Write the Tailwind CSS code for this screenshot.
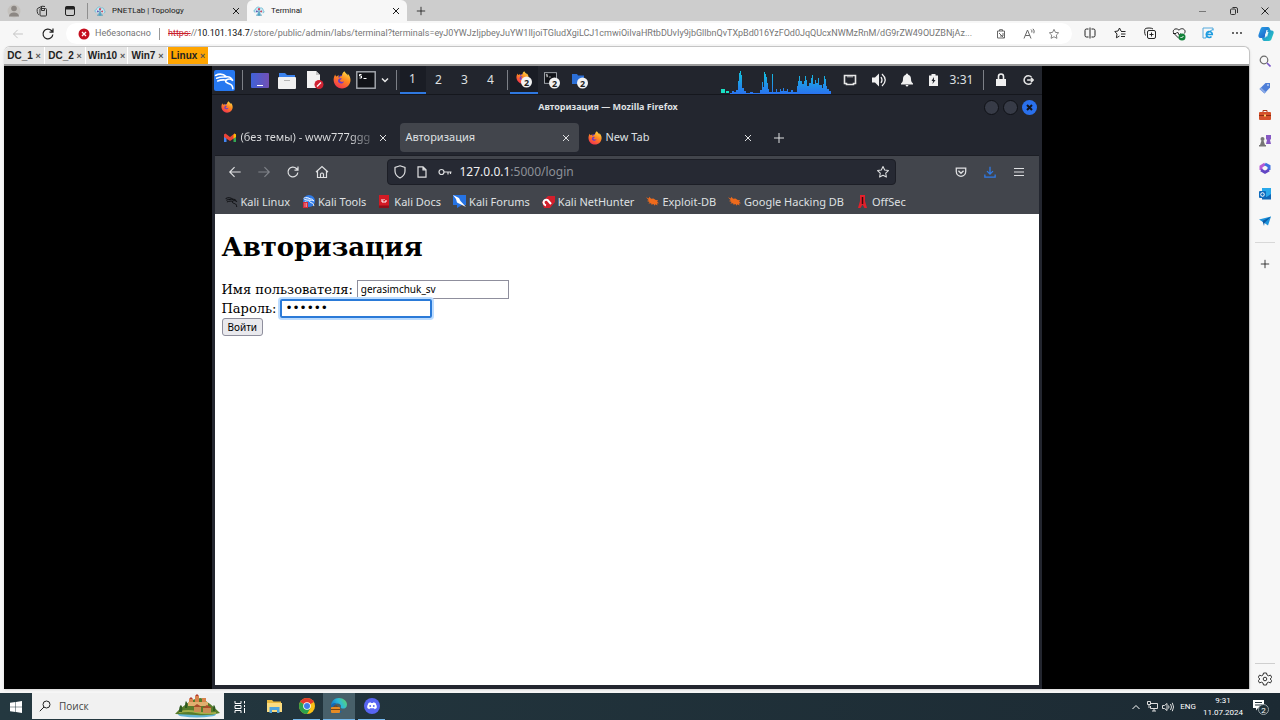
<!DOCTYPE html>
<html lang="ru">
<head>
<meta charset="utf-8">
<title>Terminal</title>
<script src="https://cdn.jsdelivr.net/npm/@tailwindcss/browser@4"></script>
</head>
<body class="h-screen overflow-hidden flex flex-col bg-[#f7f7f7] font-['Roboto','Noto_Sans',sans-serif] text-[#1b1b1b]">

<svg class="absolute size-0" aria-hidden="true">
  <defs>
    <linearGradient id="fox" x1="0.8" y1="0" x2="0.3" y2="1"><stop offset="0" stop-color="#ffe04a"/><stop offset=".45" stop-color="#ff8a1f"/><stop offset="1" stop-color="#f2304f"/></linearGradient>
    <linearGradient id="copilotA" x1="0" y1="0" x2="1" y2="1"><stop offset="0" stop-color="#1a6fd8"/><stop offset="1" stop-color="#2ad0c0"/></linearGradient>
    <linearGradient id="copilotB" x1="0" y1="0" x2="1" y2="1"><stop offset="0" stop-color="#2aa8e8"/><stop offset="1" stop-color="#1b52c4"/></linearGradient>
    <linearGradient id="desk" x1="0" y1="0" x2="1" y2="0"><stop offset="0" stop-color="#3f62d8"/><stop offset="1" stop-color="#7350b4"/></linearGradient>
    <linearGradient id="edge" x1="0" y1="0.6" x2="1" y2="0.2"><stop offset="0" stop-color="#1478c8"/><stop offset=".5" stop-color="#2bb9dc"/><stop offset="1" stop-color="#5fd66a"/></linearGradient>
    <linearGradient id="cpu" x1="0" y1="0" x2="0" y2="1"><stop offset="0" stop-color="#12c4dc"/><stop offset="1" stop-color="#2a72f0"/></linearGradient>
    <symbol id="x" viewBox="0 0 10 10"><path d="M2 2l6 6M8 2l-6 6" fill="none" stroke="currentColor"/></symbol>
    <symbol id="plus" viewBox="0 0 12 12"><path d="M6 1v10M1 6h10" fill="none" stroke="currentColor"/></symbol>
    <symbol id="star" viewBox="0 0 16 16"><path d="M8 1.800l1.900 4 4.300.6-3.100 3 .8 4.400L8 11.700l-3.900 2.100.8-4.400-3.100-3 4.300-.6z" fill="none" stroke="currentColor" stroke-width="1.200" stroke-linejoin="round"/></symbol>
    <symbol id="reload" viewBox="0 0 16 16"><path d="M13.500 8.500a5.600 5.600 0 1 1-1.600-4.500l1.500 1.500M13.700 1.800v4H9.700" fill="none" stroke="currentColor" stroke-width="1.400"/></symbol>
    <symbol id="arrow" viewBox="0 0 16 16"><path d="M14.500 8H2M7.500 2.500L2 8l5.500 5.500" fill="none" stroke="currentColor" stroke-width="1.300"/></symbol>
    <symbol id="firefox" viewBox="0 0 18 18">
      <circle cx="9" cy="9.500" r="5.500" fill="#5a35b8"/>
      <path d="M2.200 3.500C.8 5.700.3 8 .8 10.500c.8 4 4 7 8.200 7 4.800 0 8.500-3.700 8.500-8.400 0-2.800-1.300-5-3-6.500.3.900.4 1.500.3 2C13.700 2.600 12 1.700 11.500.2c-2 1.300-2.600 3-2.500 4.700-1.400 0-2.400.9-2.800 1.800-.3-.1-.5-.2-.7-.3-.2-.8 0-1.600.4-2.300-1 .3-1.800 1-2.300 1.500-.8-.3-1.200-1-1.400-2.100z" fill="url(#fox)"/>
      <path d="M5.500 8.200c.5-1 2-1.100 3.300-.6-.3.900-1.300 1.200-2 1.600.5 1.600 2.500 2.300 4.200 1-.6 2.300-3.200 3-5 1.600-1.100-.9-1.300-2.400-.5-3.600z" fill="#6a3bc8"/>
    </symbol>
    <symbol id="pnet" viewBox="0 0 16 16"><path d="M3 10C.6 9.500.8 6 3.400 6 3.600 3 7.500 1.500 9.500 4c2.600-.8 4.500 1.200 3.700 3 2.300.8 1.800 3.600-.2 3.700" fill="#cdeaf4" stroke="#5fb4cf"/><path d="M8 5v9M4 13.500h8M5 8l3 2 3-2" fill="none" stroke="#3d8fae"/><circle cx="8" cy="5.500" r="1.500" fill="#d8455c"/><circle cx="5" cy="8.500" r="1.200" fill="#6a58b8"/><circle cx="11" cy="8.500" r="1.200" fill="#d8455c"/><rect x="6" y="11" width="4" height="3" fill="#4ba3c6"/></symbol>
    <symbol id="dragon" viewBox="0 0 20 20"><path d="M1.500 5.200C5 3.300 9 3.800 12 6.500M2.500 7.800c4-1.600 7-.9 9.500-1.300 3-.3 4.700 1.200 6 3.600-2-1.600-4.200-2-6-.8-2.600 1.800 1 3.600 3 4 2 .5 2.700 2 3 4.500M3.500 10.500C7 9 9 9.400 11 9.500" fill="none" stroke="currentColor" stroke-width="1.500" stroke-linecap="round"/></symbol>
    <symbol id="term" viewBox="0 0 20 18"><rect x=".8" y=".8" width="18.400" height="16.400" fill="#111318" stroke="#a9adb3" stroke-width="1.400"/><path d="M5.500 3.500h-2v1.500h2v2h-2M7.500 7.500h3" stroke="#fff" fill="none"/></symbol>
    <symbol id="bug" viewBox="0 0 14 12"><path d="M0 1.500l3 1.200L3.500 1l2 2L8 2.800l2.500 1.700 2.500.2-1 1.500 2 1.800-2.200.2.700 2-2.500-1.200-.5 1.500L8 8.800 6 9.500 5.500 8l-3 .2L4 6.500 1 5.500l2-.8z" fill="#ee6a1c"/></symbol>
  </defs>
</svg>

<!-- Browser tab strip -->
<header class="h-[21px] shrink-0 flex items-center bg-[#cdcdcd] text-[8px]">
  <button aria-label="Профиль" class="w-7 flex justify-center"><svg class="size-3.5" viewBox="0 0 14 14"><circle cx="7" cy="7" r="6.500" fill="#c4c1bd"/><circle cx="7" cy="4.500" r="2.800" fill="#8c8783"/><path d="M2 12.500c0-5.500 10-5.500 10 0z" fill="#8c8783"/></svg></button>
  <button aria-label="Рабочие области" class="w-7 flex justify-center"><svg class="size-3" viewBox="0 0 12 12" fill="none" stroke="#333"><rect x="4" y="3.500" width="6.500" height="7.500" rx="1"/><path d="M2.800 9.800C1 9 .8 4 1.500 3.500L6 1.200l3 .3M5.500 1.500v4h3v-2"/></svg></button>
  <button aria-label="Вкладки" class="w-7 flex justify-center"><svg class="size-3" viewBox="0 0 12 12"><rect x="1.500" y="1.500" width="9" height="9" rx="1.500" fill="none" stroke="#222"/><path d="M1.500 1.500h9v3h-9z" fill="#222"/></svg></button>
  <span class="w-px h-4 ml-[3px] bg-[#8f8f8f]"></span>
  <div class="w-[159px] pl-1.5 pr-1.5 flex items-center">
    <svg class="size-3"><use href="#pnet"/></svg><a href="#" class="ml-1.5 flex-1 whitespace-nowrap">PNETLab | Topology</a><button aria-label="Закрыть вкладку"><svg class="size-2.5"><use href="#x"/></svg></button>
  </div>
  <div class="w-[160px] h-full pl-1.5 pr-1.5 flex items-center bg-[#f7f7f7] rounded-t-md">
    <svg class="size-3"><use href="#pnet"/></svg><a href="#" class="ml-1.5 flex-1">Terminal</a><button aria-label="Закрыть вкладку"><svg class="size-2.5"><use href="#x"/></svg></button>
  </div>
  <button aria-label="Новая вкладка" class="w-7 flex justify-center"><svg class="size-2.5"><use href="#plus"/></svg></button>
  <div class="ml-auto flex">
    <button aria-label="Свернуть" class="w-[31px] flex justify-center"><svg class="size-2.5" viewBox="0 0 10 10"><path d="M1 5.500h7" stroke="#777"/></svg></button>
    <button aria-label="Развернуть" class="w-[31px] flex justify-center"><svg class="size-2.5" viewBox="0 0 10 10" fill="none" stroke="#333"><rect x="1.500" y="3" width="5" height="5.500" rx="1"/><path d="M3.500 1.500h3.500a1.500 1.500 0 0 1 1.500 1.500v4"/></svg></button>
    <button aria-label="Закрыть" class="w-[31px] flex justify-center"><svg class="size-2.5" viewBox="0 0 10 10"><path d="M1.500 1.500l7 7M8.500 1.500l-7 7" stroke="#222"/></svg></button>
  </div>
</header>

<!-- Browser address bar -->
<div class="h-[25px] shrink-0 flex items-center text-[#222]">
  <button aria-label="Назад" class="w-9 flex justify-center text-[#c2c2c2]"><svg class="size-3"><use href="#arrow"/></svg></button>
  <button aria-label="Обновить" class="w-6 flex justify-center"><svg class="size-3.5"><use href="#reload"/></svg></button>
  <div class="ml-1.5 h-[21px] flex-1 min-w-0 pl-3 pr-1.5 flex items-center bg-white rounded-full text-[9px] text-[#767676]">
    <svg class="size-3 shrink-0" viewBox="0 0 12 12"><circle cx="6" cy="6" r="5.500" fill="#c50f1f"/><path d="M4 4l4 4M8 4l-4 4" stroke="#fff" stroke-width="1.300"/></svg>
    <span class="w-[60px] ml-[5px] whitespace-nowrap">Небезопасно</span>
    <span class="w-px h-3 bg-[#999] mx-1"></span>
    <p class="flex-1 min-w-0 ml-1 whitespace-nowrap"><span class="text-[#c8202c] line-through">https:</span>//<span class="text-[#111]">10.101.134.7</span>/store/public/admin/labs/terminal?terminals=eyJ0YWJzIjpbeyJuYW1lIjoiTGludXgiLCJ1cmwiOiIvaHRtbDUvIy9jbGllbnQvTXpBd016YzFOd0JqQUcxNWMzRnM/dG9rZW49OUZBNjAz...</p>
    <button aria-label="Приложение" class="w-7 flex justify-center"><svg class="size-2.5" viewBox="0 0 10 10" fill="none" stroke="#666"><path d="M1.500 2h7v7h-7zM3.500 2V.7h3V2M3 4l4.500 4.500M7 4v3H4"/></svg></button>
    <button aria-label="Прочитать вслух" class="w-[27px] flex justify-center"><svg class="size-3" viewBox="0 0 12 12" fill="none" stroke="#666"><path d="M1 10.500L4.500 2 8 10.500M2.200 7.500h4.600M8 1.500q1.500 1 .8 3M10 .8q2 2 .8 4.500"/></svg></button>
    <button aria-label="В избранное" class="w-6 flex justify-center"><svg class="size-3"><use href="#star"/></svg></button>
  </div>
  <div class="flex ml-[3px]">
    <button aria-label="Разделить экран" class="w-[30px] flex justify-center"><svg class="size-3" viewBox="0 0 12 12" fill="none" stroke="#222"><path d="M4.500 2H2.500A1.500 1.500 0 0 0 1 3.500v5A1.500 1.500 0 0 0 2.500 10h2M7.500 2h2A1.500 1.500 0 0 1 11 3.500v5A1.500 1.500 0 0 1 9.500 10h-2M6 .5v11"/></svg></button>
    <button aria-label="Избранное" class="w-[30px] flex justify-center"><svg class="size-3" viewBox="0 0 12 12" fill="none" stroke="#222"><path d="M7 4L5.500 1 4 4l-3.200.5L3 7l-.6 3.800L5.500 9M7 4.500h4.500M7 7h4.500M7 9.500h4"/></svg></button>
    <button aria-label="Коллекции" class="w-[29px] flex justify-center"><svg class="size-3" viewBox="0 0 12 12" fill="none" stroke="#222"><rect x="3.500" y="3.500" width="8" height="8" rx="1.500"/><path d="M1.500 8.500C.2 6 .5 2 1.500 1.500s6-1 7.500.5M7.500 5.500v4M5.500 7.500h4"/></svg></button>
    <button aria-label="Производительность" class="w-[29px] flex justify-center"><svg class="size-3.5" viewBox="0 0 14 14" fill="none"><path d="M7 11.500L2 6.500C-.5 3 4 0 7 3.200 10-.3 15 3 12.300 6.500M1 6.500h3L5.500 5l2 3.500 1-2" stroke="#222"/><circle cx="10" cy="10" r="3.500" fill="#13823a"/><path d="M8.500 10l1 1 2-2" stroke="#fff"/></svg></button>
    <button aria-label="Режим Internet Explorer" class="w-[29px] flex justify-center"><svg class="size-3" viewBox="0 0 12 12" fill="none"><path d="M11 3V1H1v10h3" stroke="#55a9dc"/><path d="M4.500 7.500h5.800A3 3 0 1 0 9.500 9.500" stroke="#1b9be0" stroke-width="1.600"/><path d="M11.500 3C10 2 4.500 6 4 11" stroke="#1b9be0"/></svg></button>
    <button aria-label="Меню" class="w-[29px] flex justify-center"><svg class="size-3" viewBox="0 0 12 12" fill="#222"><circle cx="2" cy="6" r=".9"/><circle cx="6" cy="6" r=".9"/><circle cx="10" cy="6" r=".9"/></svg></button>
  </div>
  <button aria-label="Copilot" class="w-[29px] flex justify-center"><svg class="size-4" viewBox="0 0 16 16"><path d="M4.500 1H10l1.500 3H8.500L6.500 12H2.500C.5 12 0 10 .6 8.500L2.500 3Q3 1 4.500 1z" fill="url(#copilotB)"/><path d="M10 1c2 0 2 3 3 3.500h.8C15.500 4.500 16 6 15.500 7.500L13.500 13q-.6 2-2.500 2H6C4.500 15 4 12 4 11.500h3.500L9.500 5z" fill="url(#copilotA)"/><path d="M7 9l1.500-3h2L9 11z" fill="#e8f7fb"/></svg></button>
</div>

<div class="flex-1 min-h-0 flex">
  <!-- Lab console page -->
  <main class="flex-1 min-w-0 ml-1 mb-1 flex flex-col border-t border-r border-[#c4c4c4] rounded-t-md bg-white shadow-sm">
    <nav class="h-[17px] shrink-0 flex gap-px text-[10px] leading-[17px] font-bold font-['Liberation_Sans',sans-serif] text-[#222]">
      <a href="#" class="w-[40px] text-center bg-[#e6e6e6] rounded-tl-md whitespace-nowrap">DC_1 <span class="text-[9px] text-[#555]">×</span></a>
      <a href="#" class="w-[40px] text-center bg-[#e6e6e6] whitespace-nowrap">DC_2 <span class="text-[9px] text-[#555]">×</span></a>
      <a href="#" class="w-[41px] text-center bg-[#e6e6e6] whitespace-nowrap">Win10 <span class="text-[9px] text-[#555]">×</span></a>
      <a href="#" class="w-[39px] text-center bg-[#e6e6e6] whitespace-nowrap">Win7 <span class="text-[9px] text-[#555]">×</span></a>
      <a href="#" class="w-[40px] text-center bg-[#ffa500] whitespace-nowrap">Linux <span class="text-[9px] text-[#555]">×</span></a>
    </nav>
    <div class="flex-1 min-h-0 border-t-2 border-[#9b9b9b] bg-black flex justify-center">

      <!-- Kali desktop -->
      <section class="w-2/3 flex flex-col bg-[#23262f] font-['Noto_Sans',sans-serif] text-[#dfe0e2]">
        <div class="h-[29px] shrink-0 flex items-center border-b border-[#15171d] bg-[#22252d] text-[12px]">
          <button aria-label="Приложения" class="w-[26px] flex justify-center"><span class="size-[21px] bg-[#2678f0] rounded-xs"><svg class="size-[21px] text-white"><use href="#dragon"/></svg></span></button>
          <span class="w-px h-5 mx-1 bg-[#7d8087]"></span>
          <button aria-label="Рабочий стол" class="w-[26px] flex justify-center"><svg class="w-[18px] h-[15px]" viewBox="0 0 18 15"><rect width="18" height="15" rx="1" fill="url(#desk)"/><path d="M6 12.500h6" stroke="#fff"/></svg></button>
          <button aria-label="Файлы" class="w-7 flex justify-center"><svg class="w-[18px] h-[17px]" viewBox="0 0 18 17"><path d="M1 1h6l2 2h8v5H1z" fill="#3b82ec"/><rect y="5" width="18" height="12" rx="1" fill="#f0f0f0"/><path d="M6 8.500h6" stroke="#b4b4b4"/></svg></button>
          <button aria-label="Редактор" class="w-7 flex justify-center"><svg class="w-[18px] h-[18px]" viewBox="0 0 18 18"><path d="M1 0h9l4 4v13H1z" fill="#f3f3f3"/><path d="M10 0v4h4z" fill="#c5c5c5"/><circle cx="13" cy="13.500" r="4.500" fill="#d02333"/><path d="M11 15.500l4-4" stroke="#fff" stroke-width="1.300"/></svg></button>
          <button aria-label="Firefox" class="w-[26px] flex justify-center"><svg class="size-[18px]"><use href="#firefox"/></svg></button>
          <button aria-label="Терминал" class="w-[22px] flex justify-center"><svg class="w-5 h-[18px]"><use href="#term"/></svg></button>
          <button aria-label="Ещё" class="w-4 flex justify-center"><svg class="size-2" viewBox="0 0 8 8"><path d="M1 2.500l3 3 3-3" fill="none" stroke="#e8e8e8" stroke-width="1.500"/></svg></button>
          <span class="w-px h-5 mx-[3px] bg-[#7d8087]"></span>
          <button class="w-[26px] h-full border-b-2 border-[#2f78e0] bg-[#1a1d25]">1</button>
          <button class="w-[26px]">2</button><button class="w-[26px]">3</button><button class="w-[26px]">4</button>
          <span class="w-px h-5 ml-[3px] mr-0.5 bg-[#7d8087]"></span>
          <button aria-label="Firefox, 2 окна" class="w-7 h-full flex items-center justify-center border-b-2 border-[#2f78e0] bg-[#1a1d25]"><svg class="w-4 h-[18px]" viewBox="0 0 16 18"><use href="#firefox" x="0" y="1" width="13" height="13"/><circle cx="10.500" cy="12" r="5.500" fill="#f2f2f2"/><text x="10.500" y="15.500" font-size="9" font-weight="700" text-anchor="middle" fill="#222">2</text></svg></button>
          <button aria-label="Терминал, 2 окна" class="w-7 flex justify-center"><svg class="w-4 h-[18px]" viewBox="0 0 16 18"><use href="#term" x="0" y="1" width="13" height="12"/><circle cx="10.500" cy="12" r="5.500" fill="#f2f2f2"/><text x="10.500" y="15.500" font-size="9" font-weight="700" text-anchor="middle" fill="#222">2</text></svg></button>
          <button aria-label="Файлы, 2 окна" class="w-7 flex justify-center"><svg class="w-4 h-[18px]" viewBox="0 0 16 18"><path d="M0 3h5l1 1.500h6V13H0z" fill="#2c6fd6"/><circle cx="10.500" cy="12" r="5.500" fill="#f2f2f2"/><text x="10.500" y="15.500" font-size="9" font-weight="700" text-anchor="middle" fill="#222">2</text></svg></button>
          <svg class="ml-auto w-[114px] h-7 shrink-0" viewBox="0 0 114 28"><path d="M0 27v-4h4v4zM5 27v-2h3v2z" fill="#19e0c4"/><path d="M9 28v-1h2v-2h2v1h2v-2h2V15h1V7h1v-2h1v4h1v13h2v3h2v2h4v-1h3v1h7v-3h2V16h1v5h1V6h1v2h1v3h1v6h1v6h1v3h3V8h1v18h3v-3h1v3h3v-3h1v2h2v-3h1v3h3v-2h1v3h3v-2h2v2h4v-6h1v-5h1v-5h1v5h2v3h2v-3h1V10h1v4h1v6h2v-3h2v-5h1V9h1v9h2v-4h1v3h2v-5h1v7h3v3h1v-4h1V10h1v3h1v7h1v3h2v2h2v3z" fill="url(#cpu)"/></svg>
          <button aria-label="Сеть" class="w-[30px] flex justify-center"><svg class="size-3.5" viewBox="0 0 14 14"><path d="M1.500 2.500h11v8h-2v1h-7v-1h-2z" fill="none" stroke="#e6e6e6" stroke-width="1.600"/><path d="M5 2.500v2M7 2.500v2M9 2.500v2" stroke="#e6e6e6"/></svg></button>
          <button aria-label="Звук" class="w-7 flex justify-center"><svg class="size-4" viewBox="0 0 16 16"><path d="M1 5.500h3l4-4v13l-4-4H1z" fill="#f0f0f0"/><path d="M10 5q2 3 0 6M11 2q6.500 6 0 12" stroke="#f0f0f0" stroke-width="1.300" fill="none"/></svg></button>
          <button aria-label="Уведомления" class="w-7 flex justify-center"><svg class="size-3.5" viewBox="0 0 14 14" fill="#f0f0f0"><path d="M7 .5c1 0 1.200 1 1.200 1.300C10.500 2.500 11 4.500 11 6c0 3 1 3.500 2 4.500v1H1v-1c1-1 2-1.500 2-4.500 0-1.500.5-3.500 2.800-4.200C5.800 1.500 6 .5 7 .5zM5.500 12h3q-.5 1.500-1.500 1.500T5.500 12z"/></svg></button>
          <button aria-label="Питание" class="w-[26px] flex justify-center"><svg class="w-[9px] h-3" viewBox="0 0 9 12"><path d="M0 1.500h2.500V0h4v1.500H9V12H0z" fill="#f0f0f0"/><path d="M5 3L2.500 7H4l-.5 3L6.500 6H5z" fill="#22252d"/></svg></button>
          <span class="w-[30px] text-center whitespace-nowrap">3:31</span>
          <span class="w-px h-5 mx-1.5 mr-1 bg-[#7d8087]"></span>
          <button aria-label="Блокировка" class="w-[26px] flex justify-center"><svg class="w-3 h-3.5" viewBox="0 0 12 14"><path d="M1 6h10v7H1z" fill="#f0f0f0"/><path d="M3.500 6V3.500a2.500 2.500 0 0 1 5 0V6" fill="none" stroke="#f0f0f0" stroke-width="1.600"/></svg></button>
          <button aria-label="Выход" class="w-7 flex justify-center"><svg class="size-3" viewBox="0 0 14 14" fill="none" stroke="#e6e6e6" stroke-width="1.800"><path d="M11 3.500A5 5 0 1 0 11 10.500M6 7h7M10.500 4.500L13 7l-2.500 2.500"/></svg></button>
        </div>

        <div class="h-6 shrink-0 flex items-center pl-[9px] pr-[5px] text-[9px] font-bold">
          <svg class="size-3"><use href="#firefox"/></svg>
          <h2 class="flex-1 text-center whitespace-nowrap">Авторизация — Mozilla Firefox</h2>
          <div class="flex justify-end gap-1">
            <button aria-label="Свернуть" class="size-[15px] rounded-full bg-[#373b47] border border-[#0f1116]"></button>
            <button aria-label="Развернуть" class="size-[15px] rounded-full bg-[#373b47] border border-[#0f1116]"></button>
            <button aria-label="Закрыть" class="size-[15px] rounded-full bg-[#2a70ec]"><svg class="size-[15px]" viewBox="0 0 15 15"><path d="M5 5l5 5M10 5l-5 5" stroke="#11131a" stroke-width="2"/></svg></button>
          </div>
        </div>

        <div class="flex-1 min-h-0 mx-[3px] mb-1 flex flex-col">
          <div class="h-9 shrink-0 pt-px flex items-center text-[11px]">
            <div class="w-[185px] pl-[9px] pr-3 flex items-center">
              <svg class="w-3 h-2.5 shrink-0" viewBox="0 0 12 10"><path d="M0 1v8h2.500V4z" fill="#4285f4"/><path d="M12 1v8H9.500V4z" fill="#34a853"/><path d="M0 1.500V4l6 4 6-4V1.500L10.500.5 6 4 1.500.5z" fill="#ea4335"/><path d="M9.500 2v3.500L12 4V1.500L10.500.5z" fill="#fbbc04"/></svg>
              <a href="#" class="ml-[5px] flex-1 min-w-0 whitespace-nowrap bg-linear-to-r from-[#dfe0e2] from-80% to-[#4a4d55] to-97% bg-clip-text text-transparent">(без темы) - www777ggg</a>
              <button aria-label="Закрыть вкладку"><svg class="size-2.5"><use href="#x"/></svg></button>
            </div>
            <div class="w-[179px] h-[29px] pl-1.5 pr-2 flex items-center bg-[#42454c] rounded-sm">
              <a href="#" class="flex-1">Авторизация</a>
              <button aria-label="Закрыть вкладку"><svg class="size-2.5"><use href="#x"/></svg></button>
            </div>
            <div class="w-[180px] pl-[9px] pr-1.5 flex items-center">
              <svg class="size-3.5"><use href="#firefox"/></svg>
              <a href="#" class="ml-1 flex-1">New Tab</a>
              <button aria-label="Закрыть вкладку"><svg class="size-2.5"><use href="#x"/></svg></button>
            </div>
            <button aria-label="Новая вкладка" class="w-10 flex justify-center"><svg class="size-3"><use href="#plus"/></svg></button>
          </div>

          <div class="h-[33px] shrink-0 pl-1.5 pr-[5px] flex items-center bg-[#42454c] border-t border-[#1c1e25]">
            <button aria-label="Назад" class="w-[29px] flex justify-center"><svg class="size-3.5"><use href="#arrow"/></svg></button>
            <button aria-label="Вперёд" class="w-[29px] flex justify-center text-[#80838a]"><svg class="size-3.5 rotate-180"><use href="#arrow"/></svg></button>
            <button aria-label="Обновить" class="w-[29px] flex justify-center"><svg class="size-3.5"><use href="#reload"/></svg></button>
            <button aria-label="Домой" class="w-[29px] flex justify-center"><svg class="size-3.5" viewBox="0 0 14 14" fill="none" stroke="currentColor" stroke-width="1.200"><path d="M1 7l6-5.500L13 7M2.500 6v6.500h9V6M5.500 12.500v-3.500q1.500-2 3 0v3.500"/></svg></button>
            <label class="ml-[50px] w-[509px] h-[26px] px-[5px] flex items-center bg-[#262933] border border-[#1c1e26] rounded-sm">
              <svg class="size-3.5 shrink-0" viewBox="0 0 14 14" fill="none" stroke="currentColor" stroke-width="1.200"><path d="M7 .8l5 1.700v3.500q0 4.500-5 7-5-2.500-5-7V2.500z"/></svg>
              <svg class="size-3 shrink-0 ml-[9px]" viewBox="0 0 12 12" fill="none" stroke="currentColor" stroke-width="1.200"><path d="M2 .8h5l3 3v7.400H2zM7 .8v3h3"/></svg>
              <svg class="w-3.5 h-3 shrink-0 ml-2.5" viewBox="0 0 14 12" fill="none" stroke="currentColor" stroke-width="1.200"><circle cx="3.500" cy="6" r="2.500"/><path d="M6 6h7.500M10 6v2.500M12.500 6v2"/></svg>
              <span class="ml-2 flex-1 text-[12px] text-[#8d9097]"><span class="text-[#f1f1f2]">127.0.0.1</span>:5000/login</span>
              <svg class="size-3.5"><use href="#star"/></svg>
            </label>
            <div class="ml-auto flex">
              <button aria-label="Pocket" class="w-[29px] flex justify-center"><svg class="size-3" viewBox="0 0 14 14" fill="none" stroke="currentColor" stroke-width="1.500"><path d="M1.500 2.500h11v4a5.500 5.500 0 0 1-11 0zM4 5.500l3 3 3-3"/></svg></button>
              <button aria-label="Загрузки" class="w-[29px] flex justify-center"><svg class="size-3" viewBox="0 0 14 14" fill="none" stroke="#2f7be8" stroke-width="1.500"><path d="M7 1v8.500M3.500 6L7 9.500 10.500 6M1 10v3h12v-3"/></svg></button>
              <button aria-label="Меню" class="w-[29px] flex justify-center"><svg class="size-3" viewBox="0 0 12 12" stroke="currentColor"><path d="M1 2.500h10M1 6h10M1 9.500h10"/></svg></button>
            </div>
          </div>

          <nav class="h-[26px] shrink-0 pl-[10px] flex items-center gap-3 whitespace-nowrap bg-[#42454c] text-[11px] leading-[13px]">
            <a href="#" class="flex items-center gap-[3px]"><svg class="size-[13px] text-[#0c0d10]"><use href="#dragon" width="13" height="13"/></svg>Kali Linux</a>
            <a href="#" class="flex items-center gap-[3px]"><svg class="size-[13px]" viewBox="0 0 13 13"><circle cx="7" cy="6" r="6" fill="#2f7be8"/><use href="#dragon" x="1" y="0" width="12" height="12" color="#fff"/><rect x="1" y="7" width="5" height="6" fill="#d8283a"/><path d="M3 8v4M4.500 8v4" stroke="#f6c6cb" stroke-width=".6"/></svg>Kali Tools</a>
            <a href="#" class="flex items-center gap-[3px]"><svg class="size-[13px]" viewBox="0 0 13 13"><rect x="1" y="0" width="10" height="13" fill="#d41a24"/><path d="M1 10.500h10V13H1z" fill="#8e0f18"/><path d="M4 4v3h4V5M5 5.500l1.500-1.500" stroke="#fff" fill="none"/></svg>Kali Docs</a>
            <a href="#" class="flex items-center gap-[3px]"><svg class="size-[13px]" viewBox="0 0 13 13"><path d="M0 0h13v10H9l-5 3v-3H0z" fill="#2673e4"/><path d="M0 0l6 3 1.500 3L13 12 6 8.500 4 7.500 3 4z" fill="#fff"/></svg>Kali Forums</a>
            <a href="#" class="flex items-center gap-[3px]"><svg class="size-[13px]" viewBox="0 0 13 13"><path d="M6 1h7v6L8 13H2L0 7z" fill="#d21f2c"/><path d="M9 9L5.500 5Q2 4 1.500 7.500 2 10 4 10.500" fill="none" stroke="#fff" stroke-width="2"/></svg>Kali NetHunter</a>
            <a href="#" class="flex items-center gap-[3px]"><svg class="size-[13px]"><use href="#bug"/></svg>Exploit-DB</a>
            <a href="#" class="flex items-center gap-[3px]"><svg class="size-[13px]"><use href="#bug"/></svg>Google Hacking DB</a>
            <a href="#" class="flex items-center gap-[3px]"><svg class="size-[13px]" viewBox="0 0 13 13"><path d="M4 0h5v6l2 7H8.500L6.500 9.500 4.500 13H2l2-7z" fill="#e3202b"/><path d="M6.500 2v7" stroke="#3a0a0d" stroke-width="1.500"/></svg>OffSec</a>
          </nav>

          <form class="flex-1 px-[7px] bg-white text-black text-[13px] leading-[19px] font-['DejaVu_Serif',serif]">
            <h1 class="pt-[17px] mb-[17px] text-[26px] leading-8 font-bold">Авторизация</h1>
            <div class="flex items-center"><label for="user">Имя пользователя:</label><input id="user" type="text" value="gerasimchuk_sv" class="ml-1 w-[152px] h-[19px] px-[3px] border border-[#8f8f9d] font-['Noto_Sans',sans-serif] text-[10px]"></div>
            <div class="flex items-center"><label for="pass">Пароль:</label><input id="pass" type="password" value="123456" class="ml-1 w-[152px] h-[19px] px-[3px] rounded-xs border-2 border-[#2a7ad8] ring-2 ring-[#bcdcff] font-['DejaVu_Sans',sans-serif] text-[12px]"></div>
            <button type="submit" class="block h-[18px] px-[5px] border border-[#8f8f9d] rounded-[3px] bg-[#e9e9ed] font-['Noto_Sans',sans-serif] text-[10px] leading-4">Войти</button>
          </form>
        </div>
      </section>
    </div>
  </main>

  <!-- Browser side bar -->
  <aside class="w-[30px] shrink-0 pt-px flex flex-col items-center">
    <button aria-label="Поиск" class="h-[27px]"><svg class="size-3" viewBox="0 0 12 12" fill="none"><circle cx="5" cy="5" r="3.800" stroke="#6b6b6b" stroke-width="1.200"/><path d="M8 8l3.500 3.500" stroke="#7b56c9" stroke-width="1.600"/></svg></button>
    <button aria-label="Покупки" class="h-[27px]"><svg class="size-3" viewBox="0 0 12 12"><path d="M6.500 1H11v4.500L5.500 11.500 .5 7z" fill="#4f7fd8"/><path d="M.5 7l5 4.500 1.500-1.500-5-4.500z" fill="#89a9e6"/><circle cx="9" cy="3" r=".8" fill="#fff"/></svg></button>
    <button aria-label="Инструменты" class="h-[27px]"><svg class="size-3" viewBox="0 0 12 12"><path d="M4 3V1.500h4V3" fill="none" stroke="#a8381a"/><rect y="3" width="12" height="8" rx="1" fill="#d4502a"/><path d="M0 6.500h12" stroke="#8c2d12"/><rect x="5" y="5.500" width="2" height="2" fill="#ffd36b"/></svg></button>
    <button aria-label="Игры" class="h-[26px]"><svg class="size-3" viewBox="0 0 12 12"><circle cx="3.500" cy="4" r="2" fill="#777"/><path d="M2.500 5.500h2L6 10h1v1.500H0V10h1z" fill="#777"/><path d="M7 0h5v4l-1 1 1 4H7l1-4-1-1z" fill="#8658c4"/></svg></button>
    <button aria-label="Microsoft 365" class="h-[27px]"><svg class="size-3" viewBox="0 0 12 12" fill="none" stroke-width="3"><path d="M2 8V4.500L6 2" stroke="#b659d6"/><path d="M6 2l4 2.200V8" stroke="#3f6fe0"/><path d="M10 8l-4 2.200L2 8" stroke="#6246c4"/></svg></button>
    <button aria-label="Outlook" class="h-[26px]"><svg class="size-3" viewBox="0 0 12 12"><path d="M3 0h9v11H3z" fill="#28a8ea"/><path d="M3 6l4.500 3L12 6v5.500H3z" fill="#1066b5"/><rect y="3" width="7" height="7" rx="1" fill="#0f6cbd"/><circle cx="3.500" cy="6.500" r="1.800" fill="none" stroke="#fff"/></svg></button>
    <button aria-label="Отправить" class="h-[27px]"><svg class="size-3" viewBox="0 0 12 12"><path d="M0 4.500L12 1.500 9 10.500 5.500 8z" fill="#1c93dc"/><path d="M3.500 6L12 1.500 5.500 8 5 11z" fill="#0c59a4"/></svg></button>
    <span class="w-5 h-px mt-2 bg-[#d8d8d8]"></span>
    <button aria-label="Добавить" class="mt-4"><svg class="size-2.5"><use href="#plus"/></svg></button>
    <span class="w-5 h-px mt-auto bg-[#cfcfcf]"></span>
    <button aria-label="Настройки" class="mt-2 mb-[7px]"><svg class="size-3.5" viewBox="0 0 14 14" fill="none" stroke="#333" stroke-linejoin="round"><path d="M5.500 1h3l.5 2 1.500.8 2-.7 1.200 2.200L12.200 7l1.500 1.700-1.200 2.200-2-.7L9 11l-.5 2h-3L5 11l-1.500-.8-2 .7L.3 8.700 1.800 7 .3 5.300l1.200-2.200 2 .7L5 3z"/><circle cx="7" cy="7" r="1.800"/></svg></button>
  </aside>
</div>

<!-- Windows taskbar -->
<footer class="h-[27px] shrink-0 flex items-center bg-linear-to-r from-[#243840] to-[#1c2a33] text-white text-[8px]">
  <button aria-label="Пуск" class="w-8 flex justify-center"><svg class="size-3" viewBox="0 0 12 12" fill="#fff"><path d="M0 1.700L5.500 1v4.700H0zM6 .9L12 0v5.700H6zM0 6.300h5.500V11L0 10.300zM6 6.300h6V12l-6-.9z"/></svg></button>
  <label class="w-[192px] h-[26px] mb-px pl-[7px] pr-1 flex items-center bg-[#f1f1f1] text-[#444]">
    <svg class="size-3 shrink-0" viewBox="0 0 12 12" fill="none" stroke="#222"><circle cx="7.500" cy="4.500" r="3.500"/><path d="M5 7L.8 11.200"/></svg>
    <input aria-label="Поиск" type="text" placeholder="Поиск" class="ml-2 w-24 flex-1 min-w-0 font-['Open_Sans',sans-serif] text-[10px] placeholder:text-[#444]">
    <svg class="w-[45px] h-6 shrink-0" viewBox="0 0 45 24"><ellipse cx="22" cy="20.500" rx="19" ry="3" fill="#62b5d6"/><path d="M0 20q4-5 10-9 8-7 16-7 8 4 19 15-10 3-24 2z" fill="#577c2b"/><path d="M4 18q10-2 17 0t20 1" stroke="#a3af4b" fill="none" stroke-width="2"/><path d="M14 5h4v6h-4zM20 2h4v8h-4zM27 4h4v7h-4z" fill="#d9824c"/><path d="M13 8h20v4H13z" fill="#e0b070"/><path d="M19 13h7v5h-7zM28 14h8v5h-8z" fill="#c98d54"/><path d="M18 13l4-3 5 3zM27 14l5-3 5 3z" fill="#a84c2a"/><path d="M20 2l2-2 2 2zM14 5l2-2 2 2z" fill="#b23a2c"/><path d="M4 18q0-6 2-7 2 2 1 7zM10 14q0-6 1-7 2 2 1 7zM38 17q0-6 1-6 2 2 1 6z" fill="#2e5a22"/></svg>
  </label>
  <button aria-label="Представление задач" class="w-8 flex justify-center"><svg class="size-3" viewBox="0 0 12 12" fill="none" stroke="#fff"><path d="M1 0v2.500h6V0M1 12V9.500h6V12M1 4.500h6v3H1zM10.500 0v2.500M10.500 7v5M10.500 4v2"/></svg></button>
  <button aria-label="Проводник" class="w-9 flex justify-center"><svg class="w-[15px] h-[13px]" viewBox="0 0 15 13"><path d="M0 0h5l1.500 1.500H14V12H0z" fill="#e9b93f"/><path d="M0 3h15v9H0z" fill="#fbdc80"/><path d="M2.500 7h10v6H10v-3H5v3H2.500z" fill="#4ea3dc"/></svg></button>
  <button aria-label="Chrome" class="w-[27px] mx-px h-full flex items-center justify-center border-b border-[#76b9ed]"><svg class="size-4" viewBox="0 0 16 16"><circle cx="8" cy="8" r="8" fill="#fbc116"/><path d="M8 8L1.100 4A8 8 0 0 1 14.900 4z" fill="#e33b2e"/><path d="M8 8L1.100 4A8 8 0 0 0 8 16l3.500-6z" fill="#2ba24c"/><circle cx="8" cy="8" r="3.800" fill="#fff"/><circle cx="8" cy="8" r="3" fill="#3f7de8"/></svg></button>
  <button aria-label="Edge" class="w-8 ml-[2px] h-full flex items-center justify-center border-b border-[#76b9ed] bg-[#48606a]"><svg class="size-4" viewBox="0 0 16 16"><path d="M0 8C0 3.500 3.500 0 8 0s8 3 8 6.500S13 11 11 10.500 10 9 10 8 9 5.500 6.500 5.500 0 6.500 0 8z" fill="url(#edge)"/><path d="M0 8c0-2 3-3.500 5-3C3 7 4.500 12.500 11 13.500 6 18 0 14 0 8z" fill="#1467b3"/><rect x="0" y="9" width="9" height="6" rx="1" fill="#e58b25"/><path d="M3 9V8h3v1M0 11.500h9" stroke="#7c4310" fill="none"/></svg></button>
  <button aria-label="Discord" class="w-[27px] ml-[3px] h-full flex items-center justify-center border-b border-[#76b9ed]"><svg class="size-4" viewBox="0 0 16 16"><circle cx="8" cy="8" r="8" fill="#5865f2"/><path d="M4.500 5l2-.8.5.8h2l.5-.8 2 .8q1.500 2.500 1.200 5l-2 1.200-.7-1H6l-.7 1-2-1.200Q3 7.500 4.500 5z" fill="#fff"/><circle cx="6.200" cy="8" r=".9" fill="#5865f2"/><circle cx="9.800" cy="8" r=".9" fill="#5865f2"/></svg></button>
  <div class="ml-auto flex items-center">
    <button aria-label="Скрытые значки" class="w-4 flex justify-center"><svg class="size-2" viewBox="0 0 8 8"><path d="M.5 6L4 2.500 7.500 6" fill="none" stroke="#fff"/></svg></button>
    <button aria-label="Сеть" class="w-4 flex justify-center"><svg class="size-[11px]" viewBox="0 0 11 11" fill="none" stroke="#ddd"><path d="M4 2.500h6.500v5H3.500V5M5 10h4M7 7.500V10M.5.5h3v3h-3zM2 3.500V7"/></svg></button>
    <button aria-label="Громкость" class="w-4 flex justify-center"><svg class="size-3" viewBox="0 0 12 12" fill="none" stroke="#ddd"><path d="M.5 4.500h2L5 2.500v7L2.500 7.500h-2zM6.500 4.500q1 1.500 0 3M8.500 3q2 3 0 6M10.300 1.800q2.500 4.200 0 8.400"/></svg></button>
    <button class="w-6 text-center">ENG</button>
    <div class="w-[46px] text-center leading-3 whitespace-nowrap"><div>9:31</div><div>11.07.2024</div></div>
    <button aria-label="Уведомления, 2" class="w-[30px] flex justify-center"><svg class="size-4" viewBox="0 0 16 16"><path d="M0 1h11v8H5l-2 2.500V9H0z" fill="#fff"/><path d="M2 3.500h7M2 6h7" stroke="#203038"/><circle cx="10.500" cy="10.500" r="5" fill="#203038" stroke="#99a3a8"/><text x="10.500" y="13.500" font-size="8" text-anchor="middle" fill="#fff">2</text></svg></button>
    <span class="w-1 h-full"></span>
  </div>
</footer>
</body>
</html>
